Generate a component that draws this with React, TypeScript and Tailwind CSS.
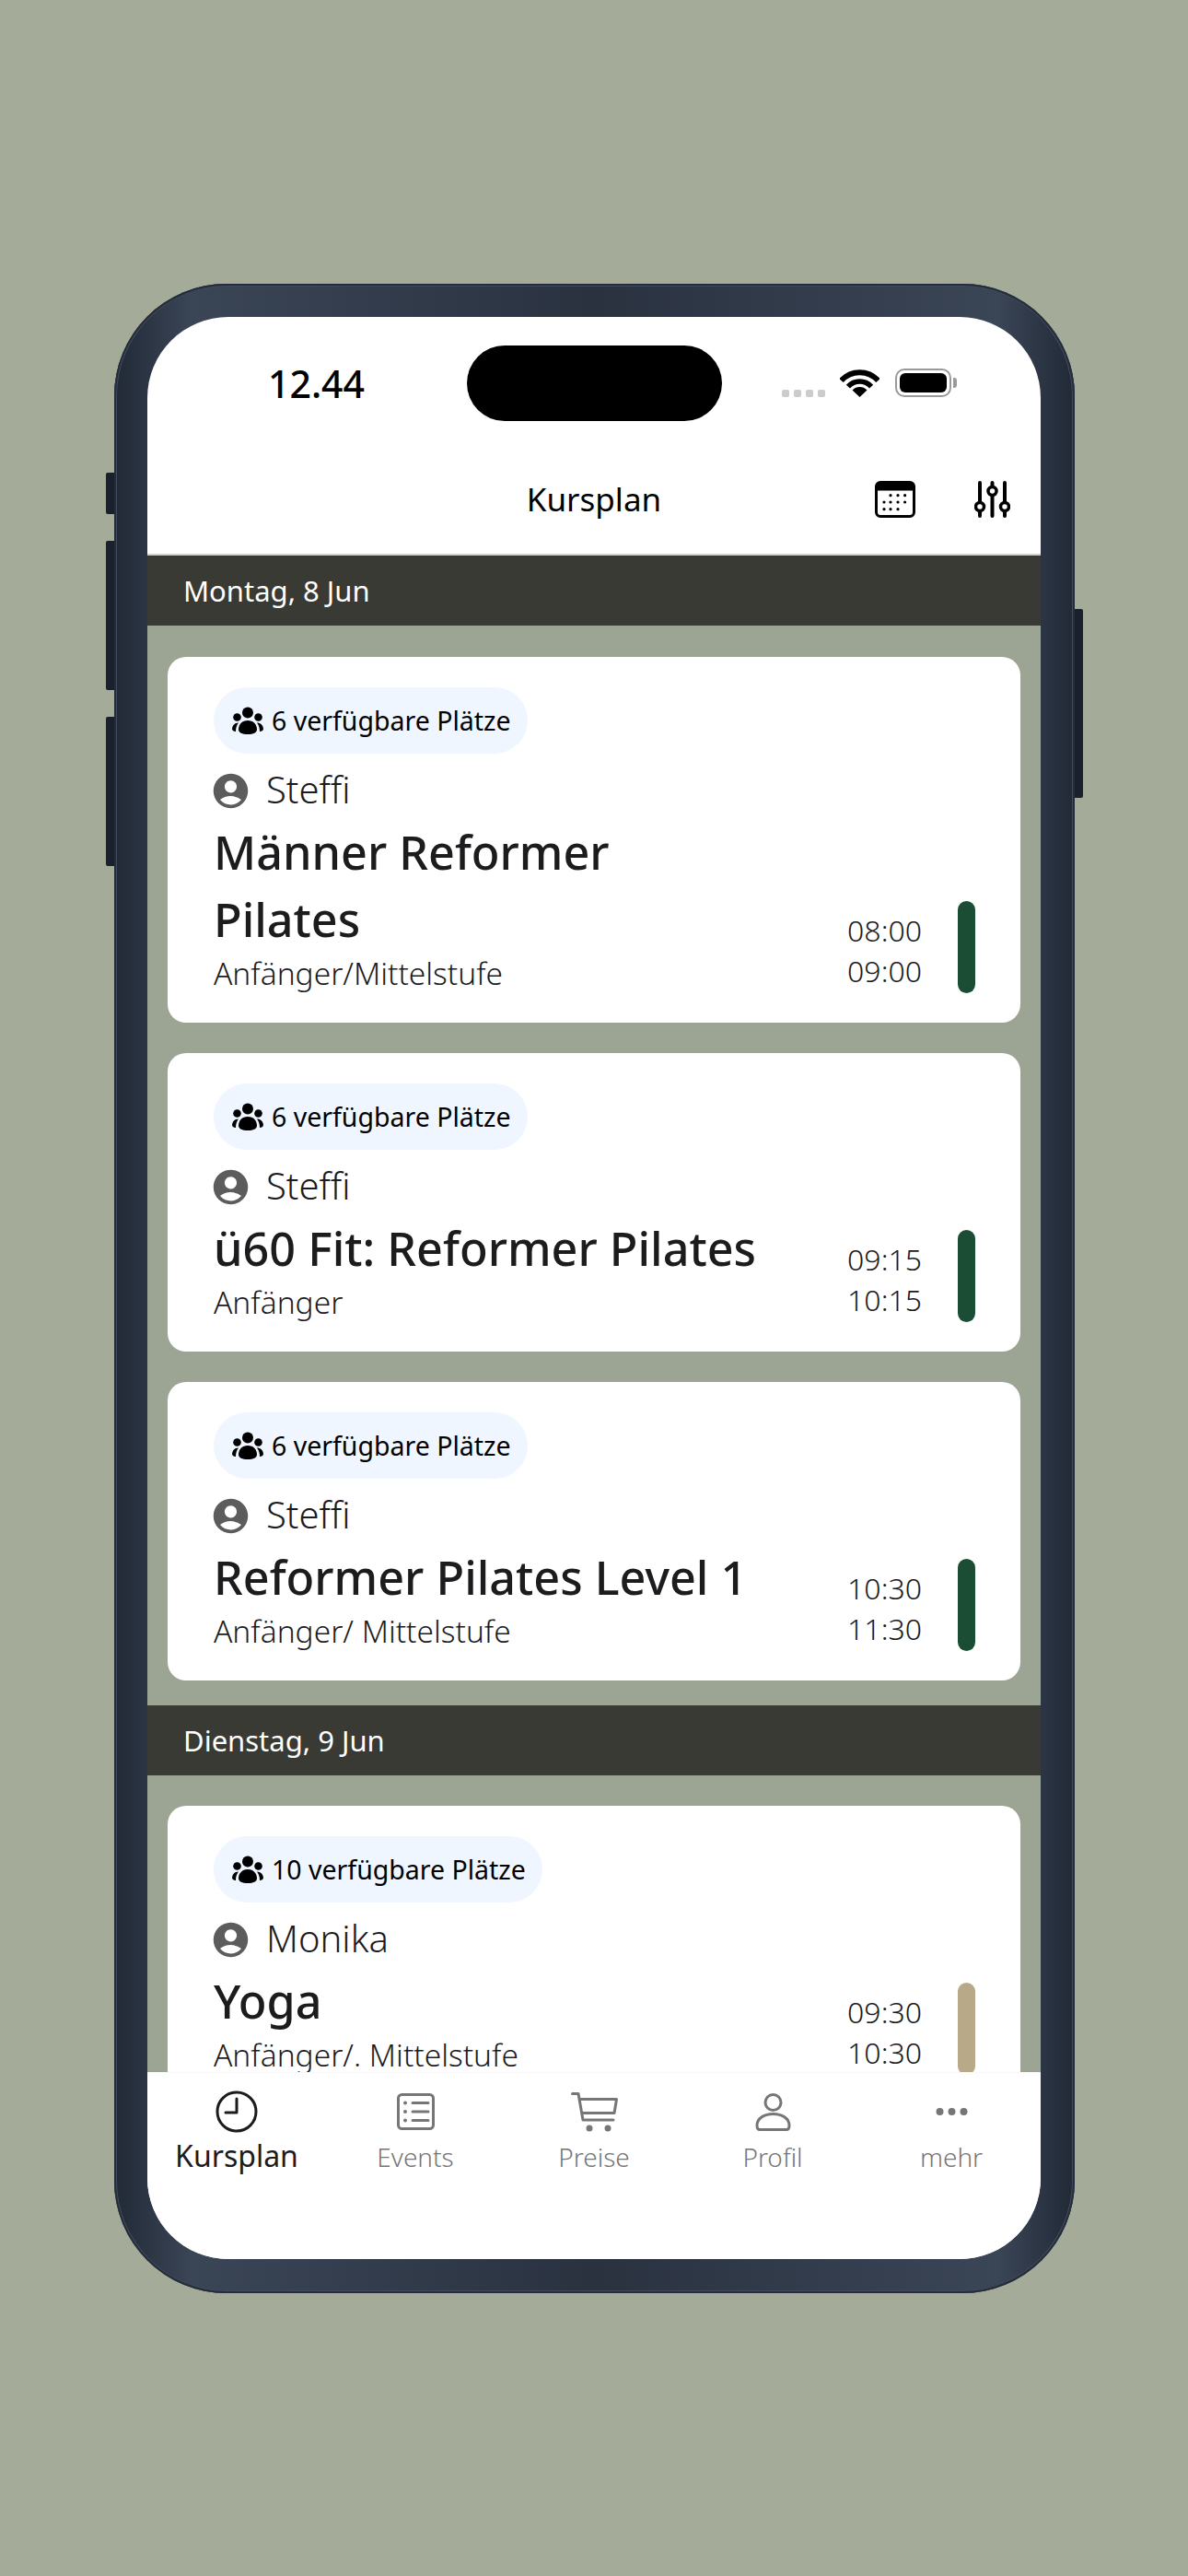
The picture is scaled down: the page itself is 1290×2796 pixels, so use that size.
import { MdAccountCircle } from "react-icons/md"

type Course = {
  spots: number
  teacher: string
  title: string
  level: string
  start: string
  end: string
  bar: "green" | "tan"
}

const monday: Course[] = [
  { spots: 6, teacher: "Steffi", title: "Männer Reformer Pilates", level: "Anfänger/Mittelstufe", start: "08:00", end: "09:00", bar: "green" },
  { spots: 6, teacher: "Steffi", title: "ü60 Fit: Reformer Pilates", level: "Anfänger", start: "09:15", end: "10:15", bar: "green" },
  { spots: 6, teacher: "Steffi", title: "Reformer Pilates Level 1", level: "Anfänger/ Mittelstufe", start: "10:30", end: "11:30", bar: "green" },
]

const tuesday: Course[] = [
  { spots: 10, teacher: "Monika", title: "Yoga", level: "Anfänger/. Mittelstufe", start: "09:30", end: "10:30", bar: "tan" },
]

function GroupIcon() {
  return (
    <svg width="34" height="30" viewBox="0 0 34 30" fill="#000">
      <circle cx="17" cy="6.5" r="6" />
      <circle cx="5.5" cy="11.5" r="4.3" />
      <circle cx="28.5" cy="11.5" r="4.3" />
      <path d="M7 25C7 19 11 15 17 15C23 15 27 19 27 25C27 28 23 30 17 30C11 30 7 28 7 25Z" />
      <path d="M0 24C.5 20 3 17.5 7 17.5C5 20 4 23 4 27C2 27 0 26 0 24Z" />
      <path d="M34 24C33.5 20 31 17.5 27 17.5C29 20 30 23 30 27C32 27 34 26 34 24Z" />
    </svg>
  )
}

function WifiIcon() {
  return (
    <svg width="43" height="31" viewBox="0 0 43 31" fill="none">
      <path d="M1.5 13A27 27 0 0 1 41.5 13" stroke="#000" strokeWidth="6" />
      <path d="M8.9 19.6A17 17 0 0 1 34.1 19.6" stroke="#000" strokeWidth="5.5" />
      <path d="M21.5 31L13.5 23.5A11 11 0 0 1 29.5 23.5Z" fill="#000" />
    </svg>
  )
}

function CalendarIcon() {
  const dots = [
    [17, 15.7], [25, 15.7], [32.6, 15.7],
    [10, 23], [17, 23], [25, 23], [32.6, 23],
    [10, 30.7], [17, 30.7], [25, 30.7],
  ]
  return (
    <svg width="44" height="40" viewBox="0 0 44 40" fill="none">
      <rect x="1.5" y="1.5" width="41" height="37" rx="4.5" stroke="#000" strokeWidth="3" />
      <path d="M1.5 10V6a4.5 4.5 0 0 1 4.5-4.5h32a4.5 4.5 0 0 1 4.5 4.5v4Z" fill="#000" stroke="#000" />
      {dots.map(([x, y]) => (
        <circle key={`${x}-${y}`} cx={x} cy={y} r="1.6" fill="#000" />
      ))}
    </svg>
  )
}

function SlidersIcon() {
  return (
    <svg width="39" height="40" viewBox="0 0 39 40" fill="none" stroke="#000">
      <path d="M6 2V38M19.5 2V38M33 2V38" strokeWidth="4" strokeLinecap="round" />
      <circle cx="6" cy="28" r="4.5" fill="#fff" strokeWidth="3.5" />
      <circle cx="19.5" cy="11" r="4.5" fill="#fff" strokeWidth="3.5" />
      <circle cx="33" cy="28" r="4.5" fill="#fff" strokeWidth="3.5" />
    </svg>
  )
}

function ClockIcon() {
  return (
    <svg width="46" height="46" viewBox="0 0 46 46" fill="none" stroke="#1c1c1e" strokeWidth="3" strokeLinecap="round" strokeLinejoin="round">
      <circle cx="23" cy="23" r="21" />
      <path d="M23 9V24H11" />
    </svg>
  )
}

function ListIcon() {
  return (
    <svg width="41" height="40" viewBox="0 0 41 40" fill="none" stroke="#767676" strokeWidth="3" strokeLinecap="round">
      <rect x="1.5" y="1.5" width="38" height="37" rx="4" />
      <path d="M17 10.5H34M17 20H34M17 29.5H34" />
      <g fill="#767676" stroke="none">
        <circle cx="9" cy="10.5" r="2" />
        <circle cx="9" cy="20" r="2" />
        <circle cx="9" cy="29.5" r="2" />
      </g>
    </svg>
  )
}

function CartIcon() {
  return (
    <svg width="51" height="43" viewBox="0 0 51 43" fill="none" stroke="#767676" strokeWidth="3" strokeLinecap="round" strokeLinejoin="round">
      <path d="M1.5 1.5H8L13 30H46" />
      <path d="M9.5 7.5H49.5L47 22.5H12" />
      <g fill="#767676" stroke="none">
        <circle cx="20" cy="39" r="3.5" />
        <circle cx="40" cy="39" r="3.5" />
      </g>
    </svg>
  )
}

function PersonIcon() {
  return (
    <svg width="39" height="41" viewBox="0 0 39 41" fill="none" stroke="#767676" strokeWidth="3">
      <circle cx="19.5" cy="10" r="8.5" />
      <path d="M2 35C2 27 10 22.5 19.5 22.5C29 22.5 37 27 37 35Q37 39.5 34 39.5H5Q2 39.5 2 35Z" />
    </svg>
  )
}

function DotsIcon() {
  return (
    <svg width="35" height="10" viewBox="0 0 35 10" fill="#767676">
      <circle cx="4.5" cy="5" r="4" />
      <circle cx="17.5" cy="5" r="4" />
      <circle cx="30.5" cy="5" r="4" />
    </svg>
  )
}

function DayHeader({ label }: { label: string }) {
  return (
    <div className="h-[76px] bg-[#383a33] flex items-center px-[39px] text-[31px] text-white">
      {label}
    </div>
  )
}

function CourseCard({ course }: { course: Course }) {
  return (
    <div className="bg-white rounded-[20px] pt-[33px] pb-8 pl-[50px] pr-[49px] flex justify-between items-end">
      <div className="w-[592px]">
        <div className="h-[72px] inline-flex items-center gap-[9px] rounded-full bg-[#eff6ff] pl-5 pr-[18px] text-[28.5px] text-black align-top">
          <GroupIcon />
          <span>{course.spots} verfügbare Plätze</span>
        </div>
        <div className="flex items-center gap-[20px] mt-[17px] h-[44px]">
          <MdAccountCircle className="w-[45px] h-[45px] -mx-[4px] mt-[3px] text-[#5c5c5c]" />
          <span className="text-[40px] font-light text-[#1c1c1e]">{course.teacher}</span>
        </div>
        <div className="text-[50.3px] leading-[73px] font-medium text-[#1c1c1e] mt-[9px]">{course.title}</div>
        <div className="text-[33.5px] leading-[44px] font-light text-[#1c1c1e]">{course.level}</div>
      </div>
      <div className="flex items-end gap-[39px]">
        <div className="text-[32px] leading-[44px] font-light text-[#1c1c1e] text-right mb-[2px]">
          <div>{course.start}</div>
          <div>{course.end}</div>
        </div>
        <div className={course.bar === "green" ? "w-[19px] h-[100px] rounded-[10px] bg-[#1a4d33]" : "w-[19px] h-[100px] rounded-[10px] bg-[#b8a988]"} />
      </div>
    </div>
  )
}

const tabs = [
  { label: "Kursplan", icon: <ClockIcon />, active: true },
  { label: "Events", icon: <ListIcon />, active: false },
  { label: "Preise", icon: <CartIcon />, active: false },
  { label: "Profil", icon: <PersonIcon />, active: false },
  { label: "mehr", icon: <DotsIcon />, active: false },
]

export default function App() {
  return (
    <div className="w-[1290px] h-[2796px] bg-[#a4ac99] pt-[308px] overflow-hidden font-['Noto_Sans',sans-serif]">
      {/* phone */}
      <div className="relative ml-[124px] w-[1043px] h-[2181px] rounded-[122px] p-[36px] bg-[linear-gradient(to_right,#212936_0%,#3a4556_8%,#2a3240_50%,#3a4556_92%,#212936_100%)] shadow-[inset_0_0_0_2px_#252d3a,inset_0_0_0_3px_#414b5c]">
        <div className="absolute left-[-9px] top-[205px] w-[9px] h-[45px] rounded-l-[2px] bg-[#1a202e]" />
        <div className="absolute left-[-9px] top-[279px] w-[9px] h-[162px] rounded-l-[2px] bg-[#1a202e]" />
        <div className="absolute left-[-9px] top-[470px] w-[9px] h-[162px] rounded-l-[2px] bg-[#1a202e]" />
        <div className="absolute right-[-9px] top-[353px] w-[9px] h-[205px] rounded-r-[2px] bg-[#1a202e]" />

        {/* screen */}
        <div className="w-[970px] h-[2108px] rounded-[88px] bg-white overflow-hidden flex flex-col">
          <div className="flex pt-[31px]">
            <div className="w-[347px] pl-[131px] pt-[13px] text-[41px] leading-[56px] font-[550] text-black">12.44</div>
            <div className="w-[277px] h-[82px] rounded-full bg-black" />
            <div className="flex-1 pl-[65px] pt-[25px] flex items-end h-[56px]">
              <div className="flex gap-[5px]">
                <span className="w-2 h-2 rounded-[2px] bg-[#cccccc]" />
                <span className="w-2 h-2 rounded-[2px] bg-[#cccccc]" />
                <span className="w-2 h-2 rounded-[2px] bg-[#cccccc]" />
                <span className="w-2 h-2 rounded-[2px] bg-[#cccccc]" />
              </div>
              <div className="ml-4"><WifiIcon /></div>
              <div className="ml-[17px] flex items-center gap-[2px]">
                <div className="w-[61px] h-[31px] rounded-[10px] border-[2px] border-[#999999] p-[3px]">
                  <div className="w-full h-full rounded-[6px] bg-black" />
                </div>
                <div className="w-[4px] h-[11px] rounded-r-[3px] bg-[#999999]" />
              </div>
            </div>
          </div>

          <div className="mt-[26px] h-[120px] border-b-2 border-[#d0d0d0] grid grid-cols-[1fr_auto_1fr] items-center">
            <div />
            <div className="text-[35px] text-black">Kursplan</div>
            <div className="flex justify-end items-center gap-16 pr-[33px]">
              <CalendarIcon />
              <SlidersIcon />
            </div>
          </div>

          <div className="flex-1 min-h-0 overflow-hidden bg-[#9ca593]">
            <DayHeader label="Montag, 8 Jun" />
            <div className="px-[22px] pt-[34px] pb-[27px] flex flex-col gap-[33px]">
              {monday.map((c) => (
                <CourseCard key={c.title} course={c} />
              ))}
            </div>
            <DayHeader label="Dienstag, 9 Jun" />
            <div className="px-[22px] pt-[33px] flex flex-col gap-[33px]">
              {tuesday.map((c) => (
                <CourseCard key={c.title} course={c} />
              ))}
            </div>
          </div>

          <div className="h-[203px] shrink-0 bg-white border-t border-[#f7f7f7] grid grid-cols-5 pt-[19px] items-start">
            {tabs.map((t) => (
              <div key={t.label} className="flex flex-col items-center">
                <div className="h-[46px] flex items-center justify-center">{t.icon}</div>
                <div className={t.active ? "text-[32px] leading-[44px] mt-[3px] text-[#1c1c1e]" : "text-[28px] leading-[40px] mt-[6px] font-light text-[#767676]"}>
                  {t.label}
                </div>
              </div>
            ))}
          </div>
        </div>
      </div>
    </div>
  )
}
